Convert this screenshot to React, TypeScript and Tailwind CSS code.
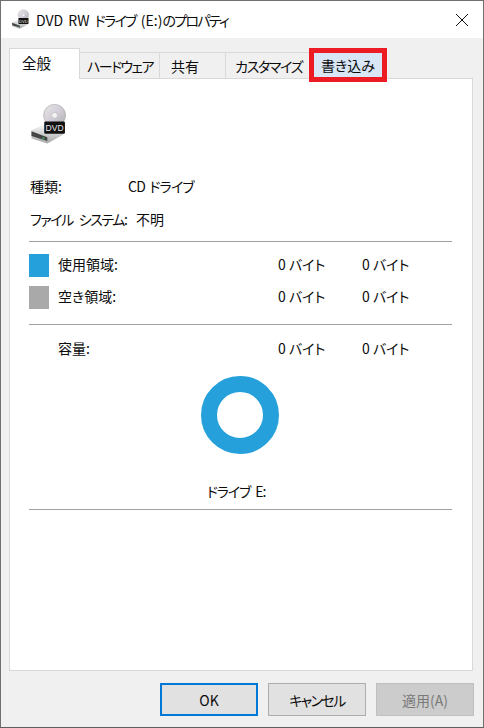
const FONT = "font-['Noto_Sans_CJK_JP','Noto_Sans',sans-serif] [font-feature-settings:'palt']";

const TABS = [
  { label: "ハードウェア", box: "w-[80px] pl-[7px] tracking-[-1.6px]" },
  { label: "共有", box: "w-[66px] pl-[11px]" },
  { label: "カスタマイズ", box: "w-[84px] pl-[9px] tracking-[-1.3px]" },
];

function DvdIcon({ size }: { size: number }) {
  return (
    <svg width={size} height={Math.round((size * 35) / 32)} viewBox="0 0 32 35">
      <defs>
        <linearGradient id={`disc${size}`} x1="0" y1="0" x2="1" y2="1">
          <stop offset="0" stopColor="#e8e8e8" />
          <stop offset="0.5" stopColor="#d3ccd8" />
          <stop offset="1" stopColor="#a9b0ad" />
        </linearGradient>
        <linearGradient id={`body${size}`} x1="0" y1="0" x2="0" y2="1">
          <stop offset="0" stopColor="#f5f5f5" />
          <stop offset="1" stopColor="#a8a8a8" />
        </linearGradient>
      </defs>
      <path d="M2 22 L12 18 L28 21 L28 26 L15 33 L2 29 Z" fill={`url(#body${size})`} />
      <path d="M2 23 L15 28 L15 31 L2 27 Z" fill="#454545" />
      <rect x="11" y="28" width="1.6" height="1.6" fill="#3aa655" />
      <circle cx="21" cy="10" r="9" fill={`url(#disc${size})`} stroke="#a0a0a0" strokeWidth="0.5" />
      <circle cx="21" cy="10" r="2.4" fill="#f4f4f4" stroke="#b5b5b5" strokeWidth="0.5" />
      <rect x="12.5" y="15" width="17" height="10" rx="1" fill="#111111" />
      <text x="21" y="22.8" textAnchor="middle" fontSize="7" fill="#e8e8e8" fontFamily="Liberation Sans, sans-serif">
        DVD
      </text>
    </svg>
  );
}

function SizeRow({ label, swatch, className }: { label: string; swatch?: string; className: string }) {
  return (
    <div className={`flex items-center ${className}`}>
      <div className={`h-[23px] w-5 shrink-0 ${swatch ?? ""}`} />
      <span className="ml-[9px] w-[220px] pb-[3px]">{label}</span>
      <span className="w-[84px] pb-[3px]">0 バイト</span>
      <span className="pb-[3px]">0 バイト</span>
    </div>
  );
}

function Button({ children, className }: { children: React.ReactNode; className: string }) {
  return (
    <div className={`flex h-[33px] w-[98px] items-center justify-center pt-px ${className}`}>{children}</div>
  );
}

export default function App() {
  return (
    <div className={`${FONT} flex h-[728px] w-[484px] flex-col border-x border-b border-x-[#707070] border-b-[#5f5f5f] border-t border-t-[#6f6f6f] bg-[#f0f0f0] text-[14px] leading-5 text-[#0c0c0c]`}>
      <header className="flex h-[37px] shrink-0 items-center bg-white pl-[10px] pr-[14px]">
        <DvdIcon size={19} />
        <span className="ml-[6px] text-[14px] [word-spacing:2px]">
          DVD RW <span className="tracking-[-1.7px]">ドライブ</span> (E:)<span className="tracking-[-1.7px]">のプロパティ</span>
        </span>
        <svg className="ml-auto" width="14" height="14" viewBox="0 0 14 14" stroke="#111" strokeWidth="1" fill="none">
          <path d="M1 1 L13 13 M13 1 L1 13" />
        </svg>
      </header>

      <div className="flex flex-1 flex-col pl-[8px] pr-[10px] pt-[10px]">
        <div className="z-10 -mb-px flex h-[31px] items-end">
          <div className="flex h-[31px] w-[71px] border-x border-t border-[#d9d9d9] border-b-0 bg-white pl-[12px] pt-[4px] text-[14.5px]">
            全般
          </div>
          {TABS.map((tab) => (
            <div
              key={tab.label}
              className={`flex h-[27px] items-center border-y border-r border-[#d9d9d9] ${tab.box}`}
            >
              {tab.label}
            </div>
          ))}
          <div className="ml-[-1px] mb-[-3px] flex h-[34px] w-[78px] shrink-0 items-center justify-center border-[5px] border-[#ed1c24] bg-[#d8e6f5]">
            書き込み
          </div>
        </div>

        <main className="flex h-[593px] flex-col border border-[#d9d9d9] bg-white pl-[19px] pr-[20px] pt-[24px]">
          <div className="h-[39px]">
            <DvdIcon size={39} />
          </div>
          <div className="mt-[34px] flex h-5 items-center pl-px">
            <span className="w-[98px]">種類:</span>
            <span className="tracking-[-0.8px] [word-spacing:2px]">CD ドライブ</span>
          </div>
          <div className="mt-[13px] flex h-5 items-center pl-px">
            <span className="w-[106px] tracking-[-1.4px] [word-spacing:4px]">ファイル システム:</span>
            <span>不明</span>
          </div>
          <hr className="mt-[12px] border-[#a0a0a0]" />
          <SizeRow label="使用領域:" swatch="bg-[#26a0da]" className="mt-[12px]" />
          <SizeRow label="空き領域:" swatch="bg-[#a9a9a9]" className="mt-[9px]" />
          <hr className="mt-[15px] border-[#a0a0a0]" />
          <SizeRow label="容量:" className="mt-[13px]" />
          <div className="mt-[15px] flex justify-center pr-px">
            <div className="size-[78px] rounded-full border-[16px] border-[#26a0da]" />
          </div>
          <div className="mt-[27px] flex h-5 items-center justify-center pr-[9px] tracking-[-1.1px] [word-spacing:3px]">ドライブ E:</div>
          <hr className="mt-[8px] border-[#a0a0a0]" />
        </main>

        <footer className="mt-[12px] -mr-px flex justify-end gap-[10px]">
          <Button className="border-2 border-[#0078d7] bg-[#e1e1e1]">OK</Button>
          <Button className="border border-[#adadad] bg-[#e1e1e1] tracking-[-1.6px]">キャンセル</Button>
          <Button className="border border-[#bfbfbf] bg-[#cccccc] text-[#7a7a7a]">適用(A)</Button>
        </footer>
      </div>
    </div>
  );
}
